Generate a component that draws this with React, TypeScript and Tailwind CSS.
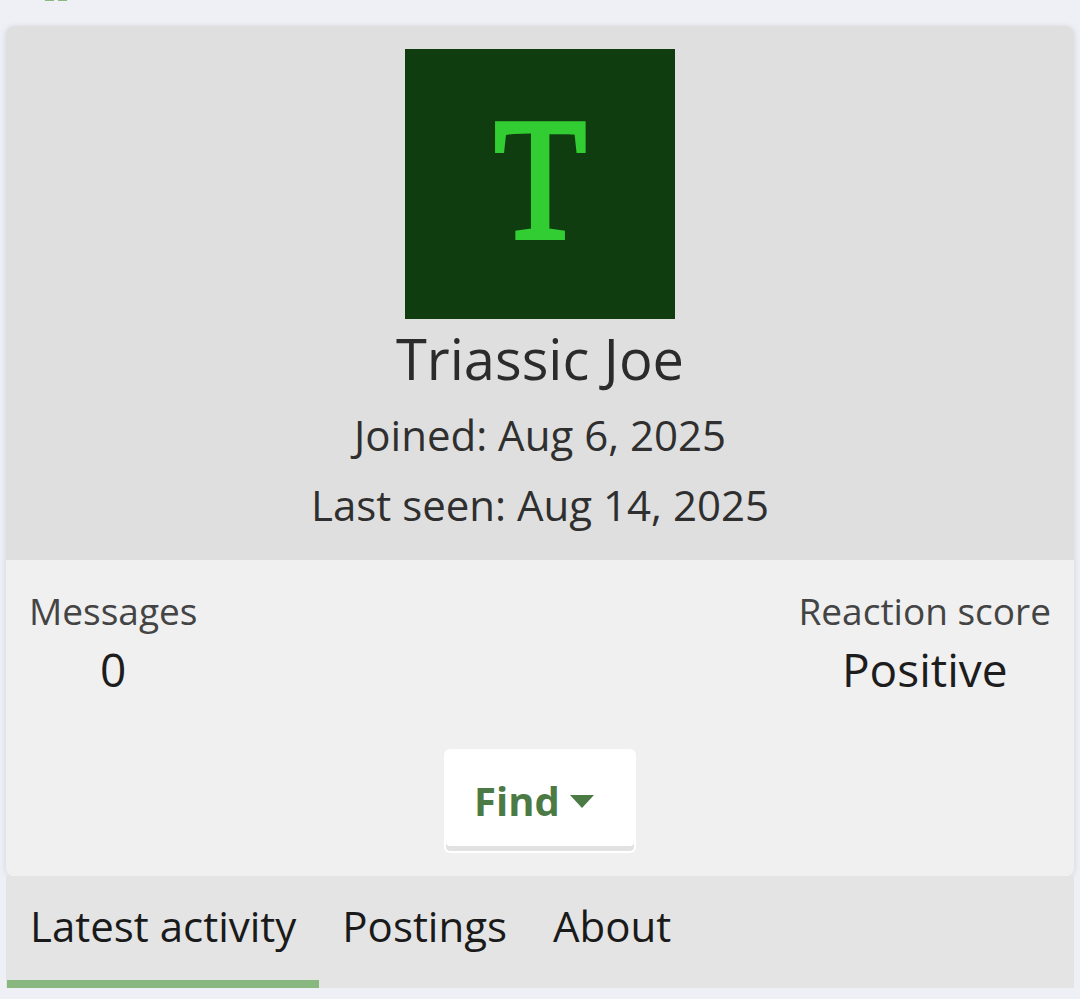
import React from "react";

export default function App() {
  return (
    <div className="min-h-[999px] bg-[#eef0f5] font-['Open_Sans',sans-serif]">
      <div className="flex h-[26px] items-start gap-[4px] pl-[45px]">
        <div className="h-[1px] w-[9px] bg-[#8ab87d]" />
        <div className="h-[1px] w-[9px] bg-[#8ab87d]" />
      </div>
      <div className="mx-[6px] overflow-hidden rounded-[8px] shadow-[0_1px_6px_rgba(0,0,0,0.12)]">
        <div className="flex flex-col items-center bg-[#dfdfdf] pt-[23px] pb-[20px]">
          <div className="flex h-[270px] w-[270px] items-center justify-center bg-[#0f3d10]">
            <span className="mb-[8px] inline-block scale-x-[0.86] font-['Liberation_Serif',serif] text-[174px] leading-none text-[#32cd32] [-webkit-text-stroke:5px_#32cd32]">T</span>
          </div>
          <div className="mt-[6px] text-[56px] leading-[1.2] text-[#2b2b2b]">Triassic Joe</div>
          <div className="mt-[8px] text-[42px] leading-[70px] text-[#2f2f2f]">Joined: Aug 6, 2025</div>
          <div className="text-[42px] leading-[70px] text-[#2f2f2f]">Last seen: Aug 14, 2025</div>
        </div>
        <div className="bg-[#f0f0f0] px-[23px] pt-[23px] pb-[23px]">
          <div className="flex justify-between">
            <div className="flex flex-col items-center">
              <div className="text-[37px] leading-[1.5] text-[#444]">Messages</div>
              <div className="mt-[3px] text-[46px] leading-[1.2] text-[#1d1d1d]">0</div>
            </div>
            <div className="flex flex-col items-center">
              <div className="text-[37px] leading-[1.5] text-[#444]">Reaction score</div>
              <div className="mt-[3px] text-[46px] leading-[1.2] text-[#1d1d1d]">Positive</div>
            </div>
          </div>
          <div className="mt-[52px] flex justify-center">
            <button className="flex h-[104px] w-[192px] items-center rounded-[6px] border-[2px] border-white bg-white pl-[28px] shadow-[inset_0_-5px_0_#e2e2e2]">
              <span className="text-[40px] font-bold leading-none text-[#4b7a45]">Find</span>
              <svg width="24" height="14" viewBox="0 0 24 14" className="ml-[10px] mt-[2px]">
                <path d="M0 0 L24 0 L12 13 Z" fill="#4b7a45" />
              </svg>
            </button>
          </div>
        </div>
      </div>
      <div className="mx-[6px] flex h-[112px] bg-[#e4e4e4] pl-[1px]">
        {["Latest activity", "Postings", "About"].map((t, i) => (
          <div
            key={t}
            className={
              "flex items-center px-[23px] pb-[5px] text-[42px] text-[#1a1a1a] border-b-[8px] " +
              (i === 0 ? "border-[#88b880]" : "border-transparent")
            }
          >
            {t}
          </div>
        ))}
      </div>
    </div>
  );
}
